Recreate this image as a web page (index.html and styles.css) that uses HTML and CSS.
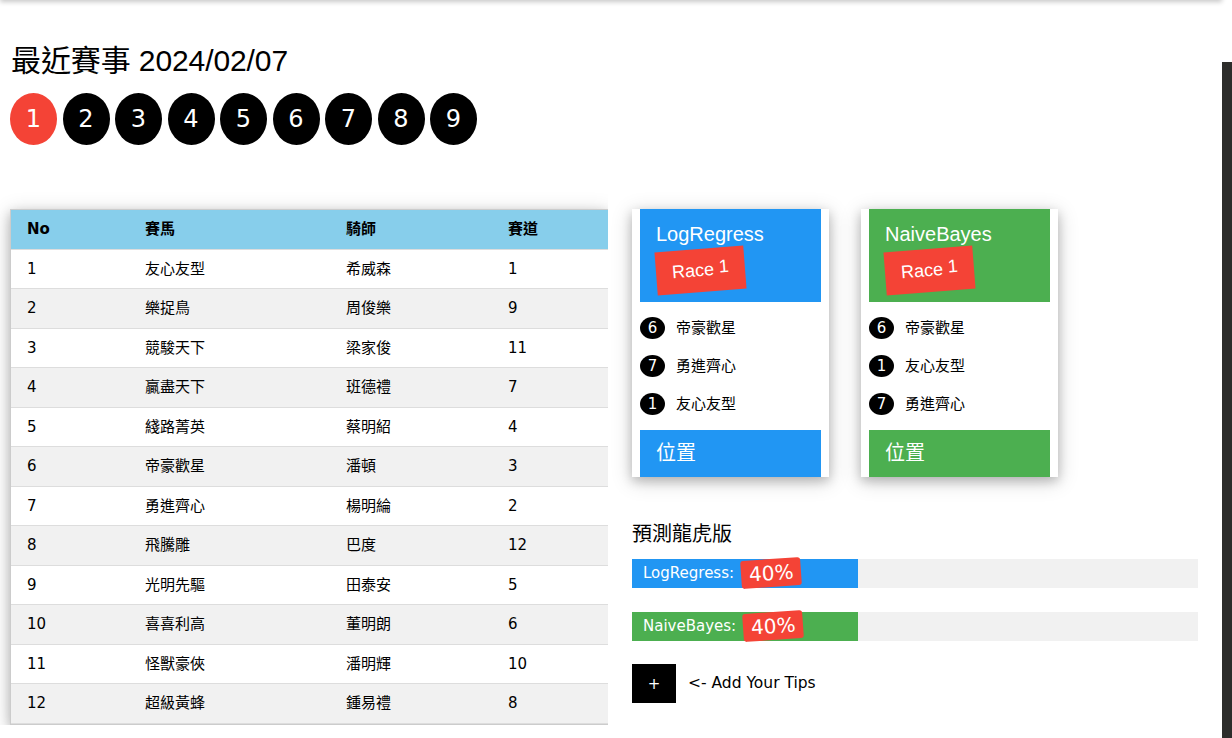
FILE: index.html
```html
<!DOCTYPE html>
<html lang="zh-Hant">
<head>
<meta charset="utf-8">
<title>最近賽事</title>
<link rel="stylesheet" href="styles.css">
</head>
<body>
<div class="topbar"></div>
<div class="sidebar-edge"></div>
<main class="page">
  <h2 class="title">最近賽事 2024/02/07</h2>
  <nav class="races">
    <a class="race-btn active">1</a>
    <a class="race-btn">2</a>
    <a class="race-btn">3</a>
    <a class="race-btn">4</a>
    <a class="race-btn">5</a>
    <a class="race-btn">6</a>
    <a class="race-btn">7</a>
    <a class="race-btn">8</a>
    <a class="race-btn">9</a>
  </nav>
  <div class="content">
    <section class="left">
      <div class="table-card">
        <table class="horses">
          <colgroup>
            <col class="c1"><col class="c2"><col class="c3"><col class="c4">
          </colgroup>
          <thead>
            <tr><th>No</th><th>賽馬</th><th>騎師</th><th>賽道</th></tr>
          </thead>
          <tbody>
            <tr><td>1</td><td>友心友型</td><td>希威森</td><td>1</td></tr>
            <tr><td>2</td><td>樂捉鳥</td><td>周俊樂</td><td>9</td></tr>
            <tr><td>3</td><td>競駿天下</td><td>梁家俊</td><td>11</td></tr>
            <tr><td>4</td><td>贏盡天下</td><td>班德禮</td><td>7</td></tr>
            <tr><td>5</td><td>綫路菁英</td><td>蔡明紹</td><td>4</td></tr>
            <tr><td>6</td><td>帝豪歡星</td><td>潘頓</td><td>3</td></tr>
            <tr><td>7</td><td>勇進齊心</td><td>楊明綸</td><td>2</td></tr>
            <tr><td>8</td><td>飛騰雕</td><td>巴度</td><td>12</td></tr>
            <tr><td>9</td><td>光明先驅</td><td>田泰安</td><td>5</td></tr>
            <tr><td>10</td><td>喜喜利高</td><td>董明朗</td><td>6</td></tr>
            <tr><td>11</td><td>怪獸豪俠</td><td>潘明輝</td><td>10</td></tr>
            <tr><td>12</td><td>超級黃蜂</td><td>鍾易禮</td><td>8</td></tr>
          </tbody>
        </table>
      </div>
    </section>
    <section class="right">
      <div class="cards">
        <div class="card">
          <div class="card-head blue">
            <h4 class="card-title">LogRegress</h4>
            <span class="race-tag">Race <span class="sup">1</span></span>
          </div>
          <ul class="picks">
            <li><span class="num">6</span><span class="name">帝豪歡星</span></li>
            <li><span class="num">7</span><span class="name">勇進齊心</span></li>
            <li><span class="num">1</span><span class="name">友心友型</span></li>
          </ul>
          <div class="card-foot blue">位置</div>
        </div>
        <div class="card">
          <div class="card-head green">
            <h4 class="card-title">NaiveBayes</h4>
            <span class="race-tag">Race <span class="sup">1</span></span>
          </div>
          <ul class="picks">
            <li><span class="num">6</span><span class="name">帝豪歡星</span></li>
            <li><span class="num">1</span><span class="name">友心友型</span></li>
            <li><span class="num">7</span><span class="name">勇進齊心</span></li>
          </ul>
          <div class="card-foot green">位置</div>
        </div>
      </div>
      <h3 class="predict-title">預測龍虎版</h3>
      <div class="bar">
        <div class="fill blue" style="width:40%">LogRegress: <span class="pct">40%</span></div>
      </div>
      <div class="bar">
        <div class="fill green" style="width:40%">NaiveBayes: <span class="pct">40%</span></div>
      </div>
      <div class="tips">
        <button class="add-btn">+</button>
        <span class="tips-text">&lt;- Add Your Tips</span>
      </div>
    </section>
  </div>
</main>
</body>
</html>
```
FILE: styles.css
```css
html, body {
  margin: 0;
  padding: 0;
  background: #fff;
  color: #000;
  font-family: "DejaVu Sans", "Noto Sans CJK TC", sans-serif;
  font-size: 15px;
  line-height: 1.5;
}

.topbar {
  position: fixed;
  top: -10px;
  left: 0;
  width: 1222px;
  height: 10px;
  background: #fff;
  box-shadow: 0 2px 5px rgba(0, 0, 0, 0.22);
  z-index: 5;
}

.sidebar-edge {
  position: fixed;
  top: 62px;
  right: 0;
  bottom: 0;
  width: 10px;
  background: #2d2d2b;
  z-index: 5;
}

.page {
  padding: 0 10px;
}

.title {
  margin: 38px 0 10px 1px;
  font-family: "Liberation Sans", "Noto Sans CJK TC", sans-serif;
  font-size: 30px;
  font-weight: normal;
  line-height: 45px;
  letter-spacing: -0.1px;
}

.races {
  display: flex;
  gap: 5.5px;
}

.race-btn {
  width: 47px;
  height: 52px;
  border-radius: 50%;
  background: #000;
  color: #fff;
  font-size: 24px;
  line-height: 52px;
  text-align: center;
}

.race-btn.active {
  background: #f44336;
}

.content {
  display: flex;
  gap: 24px;
  margin-top: 64px;
  align-items: flex-start;
}

.left {
  width: 598px;
  flex: none;
}

.table-card {
  border: 1px solid #ccc;
  border-right: none;
  box-shadow: 0 4px 10px 0 rgba(0, 0, 0, 0.2), 0 4px 20px 0 rgba(0, 0, 0, 0.19);
  clip-path: inset(-40px 0 -40px -40px);
}

.horses {
  width: 597px;
  border-collapse: collapse;
  table-layout: fixed;
}

.horses col.c1 { width: 126px; }
.horses col.c2 { width: 201px; }
.horses col.c3 { width: 162px; }
.horses col.c4 { width: 108px; }

.horses th,
.horses td {
  padding: 8px;
  text-align: left;
  line-height: 22.5px;
  border-bottom: 1px solid #ddd;
  white-space: nowrap;
}

.horses th:first-child,
.horses td:first-child {
  padding-left: 16px;
}

.horses thead tr {
  background: #87ceeb;
}

.horses th {
  font-weight: bold;
}

.horses tbody tr:nth-child(even) {
  background: #f1f1f1;
}

.right {
  width: 566px;
  flex: none;
}

.cards {
  display: flex;
  gap: 32px;
}

.card {
  width: 181px;
  padding: 0 8px;
  background: #fff;
  box-shadow: 0 4px 10px 0 rgba(0, 0, 0, 0.2), 0 4px 20px 0 rgba(0, 0, 0, 0.19);
}

.blue { background: #2196f3; }
.green { background: #4caf50; }

.card-head {
  padding: 10px 16px;
  color: #fff;
  height: 73px;
}

.card-title {
  margin: 0;
  font-family: "Liberation Sans", sans-serif;
  font-size: 20px;
  font-weight: normal;
  line-height: 30px;
}

.race-tag {
  display: inline-block;
  padding: 8px 16px;
  background: #f44336;
  color: #fff;
  font-family: "Liberation Sans", sans-serif;
  font-size: 18px;
  line-height: 27px;
  transform: rotate(-4.5deg);
}

.race-tag .sup {
  position: relative;
  top: -2px;
}

.picks {
  list-style: none;
  margin: 0;
  padding: 7px 0;
}

.picks li {
  display: flex;
  align-items: center;
  height: 38px;
  font-size: 15px;
}

.num {
  width: 25px;
  height: 22px;
  border-radius: 50%;
  background: #000;
  color: #fff;
  font-size: 15px;
  line-height: 22px;
  text-align: center;
  flex: none;
}

.name {
  margin-left: 11px;
}

.card-foot {
  height: 47px;
  padding: 0 16px;
  color: #fff;
  font-family: "Liberation Sans", "Noto Sans CJK TC", sans-serif;
  font-size: 20px;
  line-height: 47px;
}

.predict-title {
  margin: 42px 0 10px;
  font-family: "Liberation Sans", "Noto Sans CJK TC", sans-serif;
  font-size: 20px;
  font-weight: normal;
  line-height: 30px;
}

.bar {
  width: 566px;
  height: 29px;
  background: #f1f1f1;
  margin-bottom: 24px;
}

.fill {
  height: 29px;
  box-sizing: border-box;
  padding-left: 11px;
  color: #fff;
  font-size: 15px;
  line-height: 29px;
  white-space: nowrap;
}

.pct {
  display: inline-block;
  padding: 0 8px;
  margin-left: 2px;
  background: #f44336;
  color: #fff;
  border-radius: 3px;
  font-size: 20px;
  line-height: 28px;
  vertical-align: top;
  transform: rotate(-4deg);
}

.tips {
  display: flex;
  align-items: center;
  margin-top: -1px;
}

.add-btn {
  width: 44px;
  height: 39px;
  border: none;
  padding: 0;
  background: #000;
  color: #fff;
  font-family: "DejaVu Sans", sans-serif;
  font-size: 15px;
}

.tips-text {
  margin-left: 12px;
  font-size: 15.5px;
}
```
